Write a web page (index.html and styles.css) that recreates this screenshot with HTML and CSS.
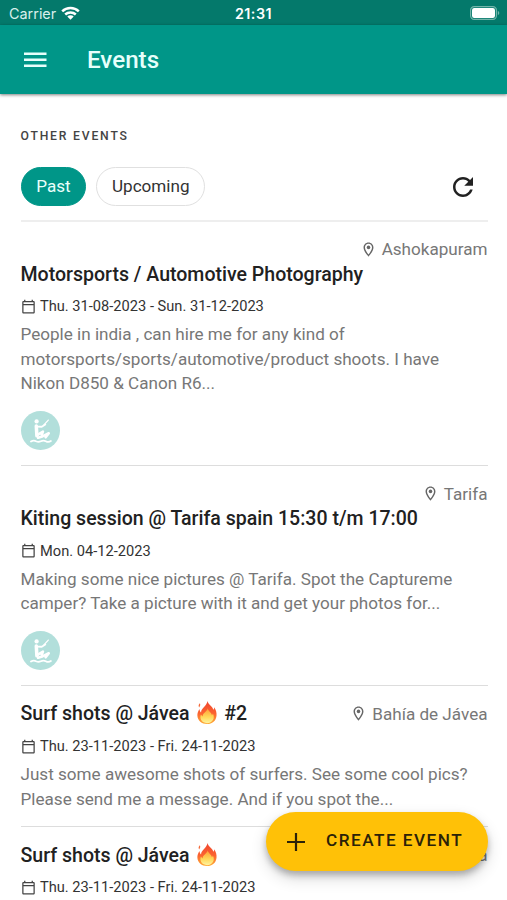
FILE: index.html
```html
<!DOCTYPE html>
<html lang="en">
<head>
<meta charset="utf-8">
<title>Events</title>
<link rel="stylesheet" href="styles.css">
</head>
<body>
<svg class="defs" width="0" height="0">
  <defs>
    <linearGradient id="flame-fill" x1="0" y1="0" x2="0" y2="1">
      <stop offset="0" stop-color="#f0452f"/>
      <stop offset=".55" stop-color="#fb6430"/>
      <stop offset="1" stop-color="#ffae35"/>
    </linearGradient>
    <linearGradient id="flame-core" x1="0" y1="0" x2="0" y2="1">
      <stop offset="0" stop-color="#ff9b35"/>
      <stop offset=".6" stop-color="#ffd95a"/>
      <stop offset="1" stop-color="#fff3a0"/>
    </linearGradient>
    <symbol id="pin" viewBox="0 0 24 24">
      <path d="M12 2C8.100 2 5 5.100 5 9c0 5.300 7 13 7 13s7-7.700 7-13c0-3.900-3.100-7-7-7zM7 9c0-2.800 2.200-5 5-5s5 2.200 5 5c0 2.900-2.900 7.200-5 9.900C9.900 16.200 7 11.800 7 9z"/>
      <circle cx="12" cy="9" r="2.500"/>
    </symbol>
    <symbol id="calendar" viewBox="0 0 24 24">
      <path d="M20 3h-1V1h-2v2H7V1H5v2H4c-1.100 0-2 .9-2 2v16c0 1.100.9 2 2 2h16c1.100 0 2-.9 2-2V5c0-1.100-.9-2-2-2zm0 18H4V10h16v11zm0-13H4V5h16v3z"/>
    </symbol>
    <symbol id="flame" viewBox="0 0 22 26">
      <path fill="url(#flame-fill)" d="M11.500 1c.7 3.700 5.500 5.800 6.200 9.200.6-.7.800-1.700.7-2.700 2 2.500 2.800 5.500 2.500 8.800C20.400 21.600 16.500 25 11 25S1.300 21.500 1 16.400c-.2-2.800.8-5 2.300-7.100 0 1.500.5 2.800 1.500 3.600.1-4.800 6-6.500 6.700-11.900z"/>
      <path fill="#f46a3a" d="M3.600 3.500c-1.500 1.300-1.700 2.700-.8 4.300C4 6.300 4.300 4.900 3.600 3.500z"/>
      <path fill="url(#flame-core)" d="M11.800 8.500c-.1 2.800 4 4.200 4.300 7.400.5-.4.900-1 1-1.800 2.600 5-.4 10-6 10-5.400 0-8.300-4.500-6.400-8.900.4.900 1 1.500 1.800 1.900-.3-3.600 4.500-5 5.300-8.600z"/>
    </symbol>
    <symbol id="kiter" viewBox="0 0 40 40">
      <circle cx="20" cy="20" r="20" fill="#b2dfdb"/>
      <circle cx="16" cy="10.700" r="2.200" fill="#fff"/>
      <g fill="none" stroke="#fff" stroke-linecap="round" stroke-linejoin="round">
        <path stroke-width="3.600" d="M15.700 15.500l.6 10"/>
        <path stroke-width="1.900" d="M16.500 16l4.800.2 3.600-2.300"/>
        <path stroke-width="1.300" d="M23.500 14.300l4.500-5"/>
        <path stroke-width="2.600" d="M17 24.500l5.500-3.300-1.200 3.300"/>
        <path stroke-width="2.600" d="M17.500 27.500l3.500-1 7.500-3.700-3.200 4.200"/>
      </g>
      <path fill="none" stroke="#fff" stroke-width="1.800" stroke-linecap="round" d="M10.200 31.300c2-1.200 3.600-1.200 5.200-.3 1.700.8 3.400.8 5 0 1.700-.8 3.400-.8 5 0 1.400.8 3.900.8 5.300-.2"/>
    </symbol>
  </defs>
</svg>

<div class="screen">
  <div class="status">
    <div class="carrier">
      <span>Carrier</span>
      <svg width="19" height="14" viewBox="0 0 19 14" fill="none" stroke="#fff" stroke-width="2.500"><path d="M1.200 5.300a12 12 0 0 1 16.600 0M4.200 8.500a7.700 7.700 0 0 1 10.600 0"/><path fill="#fff" stroke="none" d="M9.500 13.700 6.300 10.500a4.600 4.600 0 0 1 6.400 0z"/></svg>
    </div>
    <div class="time">21:31</div>
    <svg class="battery" width="30" height="14" viewBox="0 0 30 14"><rect x=".6" y=".6" width="25.800" height="12.800" rx="3.600" fill="none" stroke="#73b5aa" stroke-width="1.200"/><rect x="2" y="2" width="23" height="10" rx="2.200" fill="#fff"/><path d="M27.800 4.800c2 .8 2 3.600 0 4.400z" fill="#73b5aa"/></svg>
  </div>
  <header class="appbar">
    <svg width="24" height="16" viewBox="0 0 24 16" fill="#e6fffb"><path d="M1 .5h22.500v2.400H1zM1 6.600h22.500V9H1zM1 12.600h22.500V15H1z"/></svg>
    <h1>Events</h1>
  </header>

  <main class="content">
    <h2>OTHER EVENTS</h2>
    <div class="filters">
      <button class="chip active">Past</button>
      <button class="chip">Upcoming</button>
      <svg class="refresh" width="30" height="30" viewBox="0 0 24 24"><path d="M17.650 6.350C16.200 4.900 14.210 4 12 4c-4.420 0-7.990 3.580-7.990 8s3.570 8 7.990 8c3.730 0 6.840-2.550 7.730-6h-2.080c-.82 2.330-3.040 4-5.650 4-3.310 0-6-2.690-6-6s2.690-6 6-6c1.660 0 3.140.69 4.220 1.780L13 11h7V4l-2.350 2.350z"/></svg>
    </div>

    <article class="event">
      <div class="place"><svg><use href="#pin"/></svg><span>Ashokapuram</span></div>
      <div class="head"><h3>Motorsports / Automotive Photography</h3></div>
      <div class="date"><svg><use href="#calendar"/></svg><span>Thu. 31-08-2023 - Sun. 31-12-2023</span></div>
      <p>People in india , can hire me for any kind of<br>motorsports/sports/automotive/product shoots. I have<br>Nikon D850 &amp; Canon R6...</p>
      <svg class="sport"><use href="#kiter"/></svg>
    </article>

    <article class="event">
      <div class="place"><svg><use href="#pin"/></svg><span>Tarifa</span></div>
      <div class="head"><h3>Kiting session @ Tarifa spain 15:30 t/m 17:00</h3></div>
      <div class="date"><svg><use href="#calendar"/></svg><span>Mon. 04-12-2023</span></div>
      <p>Making some nice pictures @ Tarifa. Spot the Captureme<br>camper? Take a picture with it and get your photos for...</p>
      <svg class="sport"><use href="#kiter"/></svg>
    </article>

    <article class="event">
      <div class="head">
        <h3>Surf shots @ Jávea <svg class="fire"><use href="#flame"/></svg> #2</h3>
        <div class="place"><svg><use href="#pin"/></svg><span>Bahía de Jávea</span></div>
      </div>
      <div class="date"><svg><use href="#calendar"/></svg><span>Thu. 23-11-2023 - Fri. 24-11-2023</span></div>
      <p>Just some awesome shots of surfers. See some cool pics?<br>Please send me a message. And if you spot the...</p>
    </article>

    <article class="event">
      <div class="head">
        <h3>Surf shots @ Jávea <svg class="fire"><use href="#flame"/></svg></h3>
        <div class="place"><svg><use href="#pin"/></svg><span>Bahía de Jávea</span></div>
      </div>
      <div class="date"><svg><use href="#calendar"/></svg><span>Thu. 23-11-2023 - Fri. 24-11-2023</span></div>
    </article>
  </main>

  <button class="create">
    <svg width="18" height="18" viewBox="0 0 18 18"><path d="M7.900 0h2.200v7.900H18v2.200h-7.900V18H7.900v-7.900H0V7.900h7.900z"/></svg>
    <span>CREATE EVENT</span>
  </button>
</div>
</body>
</html>
```
FILE: styles.css
```css
* { box-sizing: border-box; }
body { margin: 0; background: #fff; font-family: Roboto, sans-serif; color: #212121; }
h1, h2, h3, p { margin: 0; }
button { font-family: inherit; border: 0; padding: 0; }
.defs { position: absolute; }
.screen { position: relative; width: 507px; height: 900px; overflow: hidden; }

.status {
  display: grid; grid-template-columns: 1fr auto 1fr; align-items: center;
  height: 25px; padding: 2px 7px 0 9px; background: #04796b; color: #fff;
  font: 14.400px/22px Inter, sans-serif;
}
.carrier { display: flex; align-items: center; gap: 5px; color: #d9efeb; }
.carrier svg { margin-top: -2px; }
.time { font-weight: 600; font-size: 14.300px; letter-spacing: .5px; margin-right: 2px; }
.battery { justify-self: end; margin-top: -2px; }

.appbar {
  display: flex; align-items: center; gap: 40px; height: 69px; padding: 0 23px;
  background: #009688; color: #e6fffb; box-shadow: 0 1px 3px rgba(0,0,0,.5);
}
.appbar h1 { font-size: 24.200px; font-weight: 500; }

.content { padding: 33px 19.500px 0 20.500px; }
h2 { font-size: 12.200px; line-height: 18px; font-weight: 500; letter-spacing: 1.800px; color: #444; }
.filters { display: flex; align-items: flex-start; gap: 10px; height: 77px; padding-top: 22px; border-bottom: 2px solid #eee; }
.chip { height: 39px; border-radius: 20px; padding: 0 14.700px 2px; font-size: 17.100px; background: #fff; color: #333; border: 1px solid #e0e0e0; }
.active { background: #009688; border-color: #009688; color: #e9fffb; }
.refresh { margin: 5px 9.500px 0 auto; fill: #212121; }

.event { padding: 15px 0 15px; border-bottom: 1px solid #ddd; margin-bottom: .4px; }
.head { display: flex; justify-content: space-between; align-items: center; height: 24.500px; }
h3 { font-size: 19.550px; line-height: 24.500px; font-weight: 500; white-space: nowrap; padding-top: 2.200px; }
.place { display: flex; justify-content: flex-end; align-items: center; gap: 5px; height: 24.500px; font-size: 17.100px; color: #777; }
.place svg { width: 17px; height: 17px; fill: #666; }
.fire { width: 22px; height: 25px; margin: -3px 1px 0 2px; vertical-align: -5px; }
.date { display: flex; align-items: center; gap: 4.500px; height: 24.500px; margin-top: 8px; font-size: 14.650px; color: #333; }
.date svg { width: 15px; height: 15px; fill: #444; }
.event p { margin-top: 3.900px; font-size: 17.100px; line-height: 24.500px; color: #777; white-space: nowrap; }
.sport { display: block; width: 39px; height: 39px; margin-top: 15.100px; }

.create {
  position: absolute; left: 266px; top: 812px; width: 222px; height: 59px; border-radius: 30px;
  display: flex; align-items: center; gap: 21px; padding: 0 0 0 21px;
  background: #ffc107; color: #2b2208; fill: #2b2208;
  font-size: 17.150px; font-weight: 500; letter-spacing: 1.500px;
  box-shadow: 0 4px 6px rgba(0,0,0,.24), 0 7px 16px rgba(0,0,0,.16);
}
.create span { padding-bottom: 3px; }
```
